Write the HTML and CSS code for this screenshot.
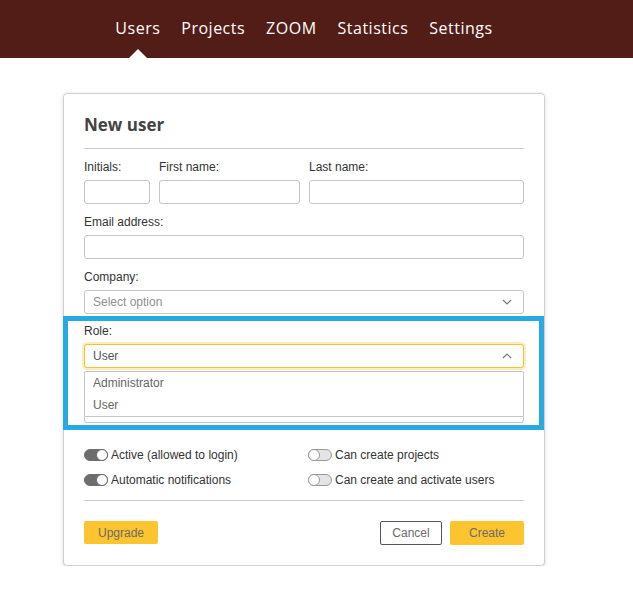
FILE: index.html
```html
<!DOCTYPE html>
<html lang="en">
<head>
    <meta charset="UTF-8">
    <meta name="viewport" content="width=device-width, initial-scale=1.0">
    <title>New user</title>
    <link rel="stylesheet" href="styles.css">
</head>
<body>
    <header class="topbar">
        <nav class="nav">
            <a class="nav-link active" href="#">Users</a>
            <a class="nav-link" href="#">Projects</a>
            <a class="nav-link" href="#">ZOOM</a>
            <a class="nav-link" href="#">Statistics</a>
            <a class="nav-link" href="#">Settings</a>
        </nav>
    </header>

    <main class="page">
        <div class="card">
            <h2 class="card-title">New user</h2>
            <hr class="divider first">

            <div class="row names">
                <div class="field">
                    <label>Initials:</label>
                    <input type="text" class="input">
                </div>
                <div class="field">
                    <label>First name:</label>
                    <input type="text" class="input">
                </div>
                <div class="field">
                    <label>Last name:</label>
                    <input type="text" class="input">
                </div>
            </div>

            <div class="field">
                <label>Email address:</label>
                <input type="text" class="input">
            </div>

            <div class="field">
                <label>Company:</label>
                <div class="input select placeholder">
                    <span>Select option</span>
                    <svg class="chevron" width="10" height="6" viewBox="0 0 10 6"><path d="M1 1 L5 5 L9 1" fill="none" stroke="#777" stroke-width="1.2"/></svg>
                </div>
            </div>

            <!-- highlighted role section -->
            <div class="highlight">
                <div class="field">
                    <label>Role:</label>
                    <div class="input select focused">
                        <span>User</span>
                        <svg class="chevron" width="10" height="6" viewBox="0 0 10 6"><path d="M1 5 L5 1 L9 5" fill="none" stroke="#777" stroke-width="1.2"/></svg>
                    </div>
                    <div class="dropdown">
                        <ul class="options">
                            <li>Administrator</li>
                            <li>User</li>
                        </ul>
                        <div class="dropdown-tail"></div>
                    </div>
                </div>
            </div>

            <div class="toggles">
                <div class="toggle-row"><span class="toggle on"></span>Active (allowed to login)</div>
                <div class="toggle-row"><span class="toggle"></span>Can create projects</div>
                <div class="toggle-row"><span class="toggle on"></span>Automatic notifications</div>
                <div class="toggle-row"><span class="toggle"></span>Can create and activate users</div>
            </div>

            <hr class="divider">

            <div class="actions">
                <button class="btn yellow upgrade">Upgrade</button>
                <div class="actions-right">
                    <button class="btn outline">Cancel</button>
                    <button class="btn yellow">Create</button>
                </div>
            </div>
        </div>
    </main>
</body>
</html>
```

FILE: styles.css
```css
body {
    margin: 0;
    background: #fff;
    font-family: "Liberation Sans", Arial, sans-serif;
    font-size: 12px;
    color: #333;
}
.topbar {
    background-color: #521d17;
    height: 58px;
}
.nav {
    width: 482px;
    margin-left: 63px;
    height: 58px;
    display: flex;
    justify-content: center;
    align-items: center;
    gap: 21px;
}
.nav-link {
    position: relative;
    color: #fff;
    text-decoration: none;
    font-family: "Open Sans", sans-serif;
    font-size: 16px;
    letter-spacing: 0.5px;
    line-height: 22px;
    margin-top: -2px;
}
.nav-link.active::after {
    content: "";
    position: absolute;
    left: 50%;
    margin-left: -12px;
    top: 32px;
    border-left: 12px solid transparent;
    border-right: 12px solid transparent;
    border-bottom: 12px solid #fff;
}
.page {
    width: 482px;
    margin-left: 63px;
    padding-top: 35px;
}
.card {
    border: 1px solid #cfcfcf;
    border-radius: 4px;
    box-shadow: 0 1px 4px rgba(0, 0, 0, 0.15);
    padding: 20px 20px 20px 20px;
    background: #fff;
}
.card-title {
    margin: 0;
    font-family: "Open Sans", sans-serif;
    font-size: 17px;
    font-weight: 700;
    line-height: 22px;
    color: #444;
}
.divider {
    border: none;
    border-top: 1px solid #c8c8c8;
    margin: 13px 0 20px;
}
.divider.first {
    margin: 12px 0 11px;
}
.field {
    display: flex;
    flex-direction: column;
    margin-bottom: 11px;
}
.field label {
    line-height: 14px;
    margin-bottom: 6px;
    color: #333;
}
.row.names {
    display: flex;
    gap: 9px;
}
.row.names .field:nth-child(1) { width: 66px; }
.row.names .field:nth-child(2) { width: 141px; }
.row.names .field:nth-child(3) { flex: 1; }
.input {
    box-sizing: border-box;
    height: 24px;
    border: 1px solid #c6c6c6;
    border-radius: 3px;
    padding: 0 8px;
    font-family: inherit;
    font-size: 12px;
    color: #555;
    background: #fff;
    margin: 0;
}
.select {
    display: flex;
    align-items: center;
    justify-content: space-between;
}
.select.placeholder {
    color: #8f8f8f;
}
.select .chevron {
    margin-right: 3px;
}
.select.focused {
    border-color: #f4c237;
    box-shadow: 0 0 0 2px rgba(249, 222, 130, 0.55);
    color: #555;
}
.highlight {
    margin: -9px -20px 0 -21px;
    border: 5px solid #27a9e1;
    padding: 3px 15px 2px 16px;
}
.highlight .field {
    margin-bottom: 0;
}
.dropdown {
    margin-top: 3px;
}
.options {
    list-style: none;
    margin: 0;
    padding: 0;
    border: 1px solid #c6c6c6;
    border-radius: 2px 2px 0 0;
    color: #666;
}
.options li {
    padding: 0 8px;
    line-height: 22px;
}
.dropdown-tail {
    height: 5px;
    border: 1px solid #c6c6c6;
    border-top: none;
    border-radius: 0 0 3px 3px;
}
.toggles {
    display: grid;
    grid-template-columns: 224px 1fr;
    row-gap: 11px;
    margin-top: 18px;
}
.toggle-row {
    display: flex;
    align-items: center;
    line-height: 14px;
    color: #333;
}
.toggle {
    position: relative;
    box-sizing: border-box;
    width: 24px;
    height: 12px;
    border-radius: 6px;
    background: #e4e4e4;
    border: 1px solid #999;
    margin-right: 3px;
}
.toggle::after {
    content: "";
    position: absolute;
    top: -1px;
    left: -1px;
    width: 10px;
    height: 10px;
    border-radius: 50%;
    background: #fff;
    border: 1px solid #999;
}
.toggle.on {
    background: #6d6d6d;
    border-color: #6d6d6d;
}
.toggle.on::after {
    left: auto;
    right: -1px;
    border-color: #6d6d6d;
}
.actions {
    display: flex;
    justify-content: space-between;
    align-items: flex-start;
}
.actions-right {
    display: flex;
    gap: 8px;
}
.btn {
    box-sizing: border-box;
    height: 24px;
    padding: 0;
    font-family: inherit;
    font-size: 12px;
    color: #6b6b6b;
    border-radius: 2px;
    cursor: pointer;
}
.btn.yellow {
    width: 74px;
    background: #fcc42e;
    border: none;
}
.btn.upgrade {
    height: 23px;
}
.btn.outline {
    width: 62px;
    background: #fff;
    border: 1px solid #555;
}
```
